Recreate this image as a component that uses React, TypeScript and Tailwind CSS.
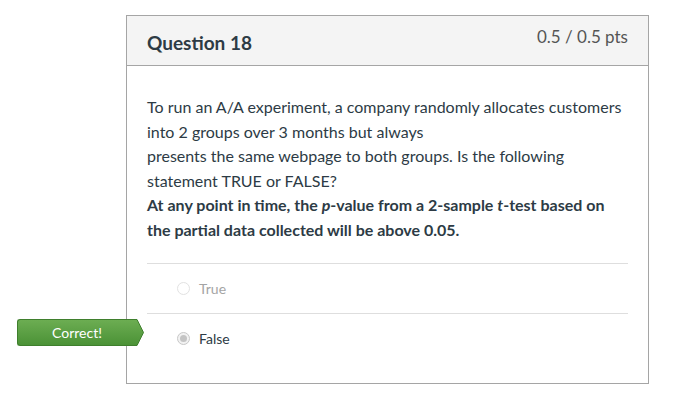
export default function App() {
  return (
    <div className="min-h-screen w-[690px] h-[410px] bg-white pt-[15px] pl-[126px]" style={{ fontFamily: "Lato, 'Open Sans', sans-serif" }}>
      <div className="relative w-[523px] h-[369px] border border-[#a5a5a5] bg-white">
        {/* Header */}
        <div className="flex justify-between h-[50px] bg-[#f4f4f4] border-b border-[#a5a5a5] pl-[20px] pr-[20px]">
          <h2 className="pt-[15px] text-[19px] font-bold text-[#2d3b45] leading-[24px]">Question 18</h2>
          <span className="pt-[11px] text-[17px] text-[#555] leading-[20px]">0.5 / 0.5 pts</span>
        </div>

        {/* Question text */}
        <div className="px-[20px] pt-[29px] text-[16px] leading-[24.5px] text-[#2d3b45]">
          <p>To run an A/A experiment, a company randomly allocates customers</p>
          <p>into 2 groups over 3 months but always</p>
          <p>presents the same webpage to both groups. Is the following</p>
          <p>statement TRUE or FALSE?</p>
          <p className="font-bold">
            At any point in time, the <i>p</i>-value from a 2-sample <i>t</i>-test based on
          </p>
          <p className="font-bold">the partial data collected will be above 0.05.</p>
        </div>

        {/* Answers */}
        <div className="mx-[20px] mt-[21px]">
          <div className="flex items-center h-[50px] border-t border-[#dedede] pl-[30px]">
            <span className="w-[13px] h-[13px] rounded-full border border-[#e2e2e2] bg-white mr-[9px]" />
            <span className="text-[14px] text-[#a4a4a4]">True</span>
          </div>
          <div className="relative flex items-center h-[50px] border-t border-[#dedede] pl-[30px]">
            <span className="flex items-center justify-center w-[13px] h-[13px] rounded-full border border-[#c8c8c8] bg-[#f2f2f2] mr-[9px]">
              <span className="w-[7px] h-[7px] rounded-full bg-[#c4c4c4]" />
            </span>
            <span className="text-[14px] text-[#2d3b45]">False</span>
          </div>
        </div>

        {/* Correct badge */}
        <div className="absolute left-[-110px] top-[303px] flex items-center">
          <div className="flex items-center justify-center w-[119px] h-[27px] rounded-l-[3px] bg-gradient-to-b from-[#6cad52] to-[#4b9236] border border-r-0 border-[#3f7f2d] text-white text-[14px]">
            Correct!
          </div>
          <svg width="8" height="27" viewBox="0 0 8 27" className="block">
            <defs>
              <linearGradient id="g" x1="0" y1="0" x2="0" y2="1">
                <stop offset="0" stopColor="#6cad52" />
                <stop offset="1" stopColor="#4b9236" />
              </linearGradient>
            </defs>
            <path d="M0 0.5 L1 0.5 L7.5 13.5 L1 26.5 L0 26.5 Z" fill="url(#g)" stroke="#3f7f2d" strokeWidth="1" />
            <rect x="0" y="1" width="1" height="25" fill="url(#g)" />
          </svg>
        </div>
      </div>
    </div>
  );
}
